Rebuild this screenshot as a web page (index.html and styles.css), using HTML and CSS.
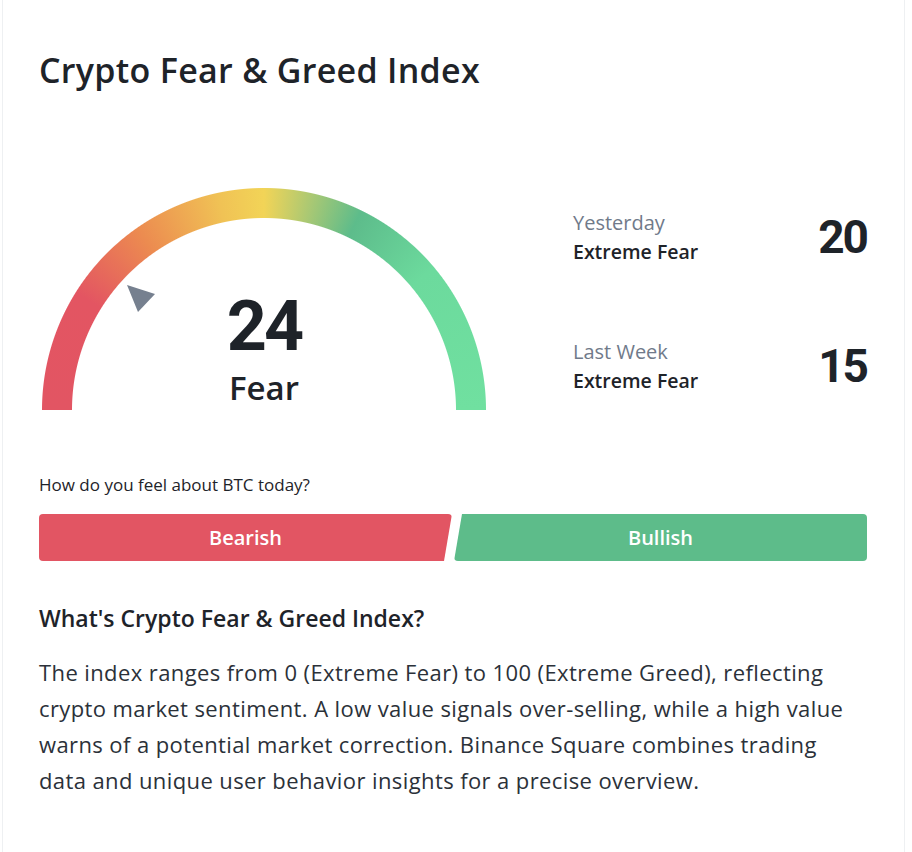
FILE: index.html
```html
<!DOCTYPE html>
<html lang="en">
<head>
<meta charset="utf-8">
<title>Crypto Fear &amp; Greed Index</title>
<link rel="stylesheet" href="styles.css">
</head>
<body>
<div class="card">
  <h1 class="title">Crypto Fear &amp; Greed Index</h1>
  <div class="top">
    <div class="gauge">
      <div class="arc"></div>
      <svg class="pointer" width="444" height="222" viewBox="0 0 444 222" aria-hidden="true">
        <polygon points="85,97 113,106 96,124" fill="#76808F"/>
      </svg>
      <div class="reading">
        <div class="value">24</div>
        <div class="label">Fear</div>
      </div>
    </div>
    <div class="stats">
      <div class="stat">
        <div class="stat-text">
          <div class="stat-when">Yesterday</div>
          <div class="stat-class">Extreme Fear</div>
        </div>
        <div class="stat-value">20</div>
      </div>
      <div class="stat">
        <div class="stat-text">
          <div class="stat-when">Last Week</div>
          <div class="stat-class">Extreme Fear</div>
        </div>
        <div class="stat-value">15</div>
      </div>
    </div>
  </div>
  <p class="question">How do you feel about BTC today?</p>
  <div class="vote">
    <button class="btn bearish">Bearish</button>
    <button class="btn bullish">Bullish</button>
  </div>
  <h2 class="subtitle">What's Crypto Fear &amp; Greed Index?</h2>
  <p class="desc">The index ranges from 0 (Extreme Fear) to 100 (Extreme Greed), reflecting crypto market sentiment. A low value signals over-selling, while a high value warns of a potential market correction. Binance Square combines trading data and unique user behavior insights for a precise overview.</p>
</div>
</body>
</html>
```
FILE: styles.css
```css
html, body {
  margin: 0;
  padding: 0;
  background: #ffffff;
}
body {
  font-family: "Open Sans", "Noto Sans", Arial, sans-serif;
  color: #1E2329;
}
.card {
  box-sizing: border-box;
  width: 903px;
  min-height: 852px;
  margin-left: 2px;
  padding: 48px 37px 40px 36px;
  border-left: 1px solid #EEF0F2;
  border-right: 1px solid #EEF0F2;
}
.title {
  margin: 0;
  font-size: 34px;
  line-height: 44px;
  font-weight: 600;
  letter-spacing: 0.3px;
  color: #1E2329;
}
.top {
  display: flex;
  justify-content: space-between;
  margin-top: 96px;
}
.gauge {
  display: grid;
  width: 444px;
  height: 222px;
  margin-left: 3px;
}
.gauge > * {
  grid-area: 1 / 1;
}
.arc {
  width: 444px;
  height: 222px;
  background: conic-gradient(from 270deg at 50% 100%,
    #E25563 0deg, #E35562 32deg, #EC8B50 55deg, #F0C255 78deg,
    #F2D457 90deg, #A8C874 103deg, #5DBC8B 116deg, #6CDA9D 140deg,
    #70E0A0 180deg, transparent 180deg);
  -webkit-mask: radial-gradient(circle at 50% 100%, transparent 191.5px, #000 192.5px, #000 221.5px, transparent 222.5px);
  mask: radial-gradient(circle at 50% 100%, transparent 191.5px, #000 192.5px, #000 221.5px, transparent 222.5px);
}
.pointer {
  display: block;
}
.reading {
  align-self: end;
  justify-self: center;
  text-align: center;
}
.value {
  font-family: Roboto, "Open Sans", sans-serif;
  font-size: 70px;
  line-height: 80px;
  font-weight: 700;
  letter-spacing: -3px;
}
.label {
  font-size: 33px;
  line-height: 44px;
  font-weight: 600;
}
.stats {
  width: 294px;
  padding-top: 20px;
  display: flex;
  flex-direction: column;
  gap: 71px;
}
.stat {
  display: flex;
  justify-content: space-between;
  align-items: center;
}
.stat-when {
  font-size: 20px;
  line-height: 29px;
  color: #707A8A;
}
.stat-class {
  font-size: 19.5px;
  line-height: 29px;
  font-weight: 600;
  color: #1E2329;
}
.stat-value {
  font-family: Roboto, "Open Sans", sans-serif;
  font-size: 46px;
  line-height: 50px;
  font-weight: 700;
  letter-spacing: -2px;
}
.question {
  margin: 63px 0 0;
  font-size: 17px;
  line-height: 24px;
  color: #1E2329;
}
.vote {
  display: flex;
  gap: 2px;
  margin-top: 17px;
}
.btn {
  flex: 1;
  height: 47px;
  border: 0;
  border-radius: 4px;
  font-family: inherit;
  font-size: 20px;
  font-weight: 600;
  color: #ffffff;
  padding: 0;
}
.bearish {
  background: #E25563;
  clip-path: polygon(0 0, 100% 0, calc(100% - 8px) 100%, 0 100%);
}
.bullish {
  background: #5DBC8A;
  clip-path: polygon(8px 0, 100% 0, 100% 100%, 0 100%);
}
.subtitle {
  margin: 42px 0 0;
  font-size: 23px;
  line-height: 30px;
  font-weight: 600;
}
.desc {
  margin: 21px 0 0;
  font-size: 22px;
  line-height: 36px;
  letter-spacing: 0.4px;
  color: #2B3139;
}
```
